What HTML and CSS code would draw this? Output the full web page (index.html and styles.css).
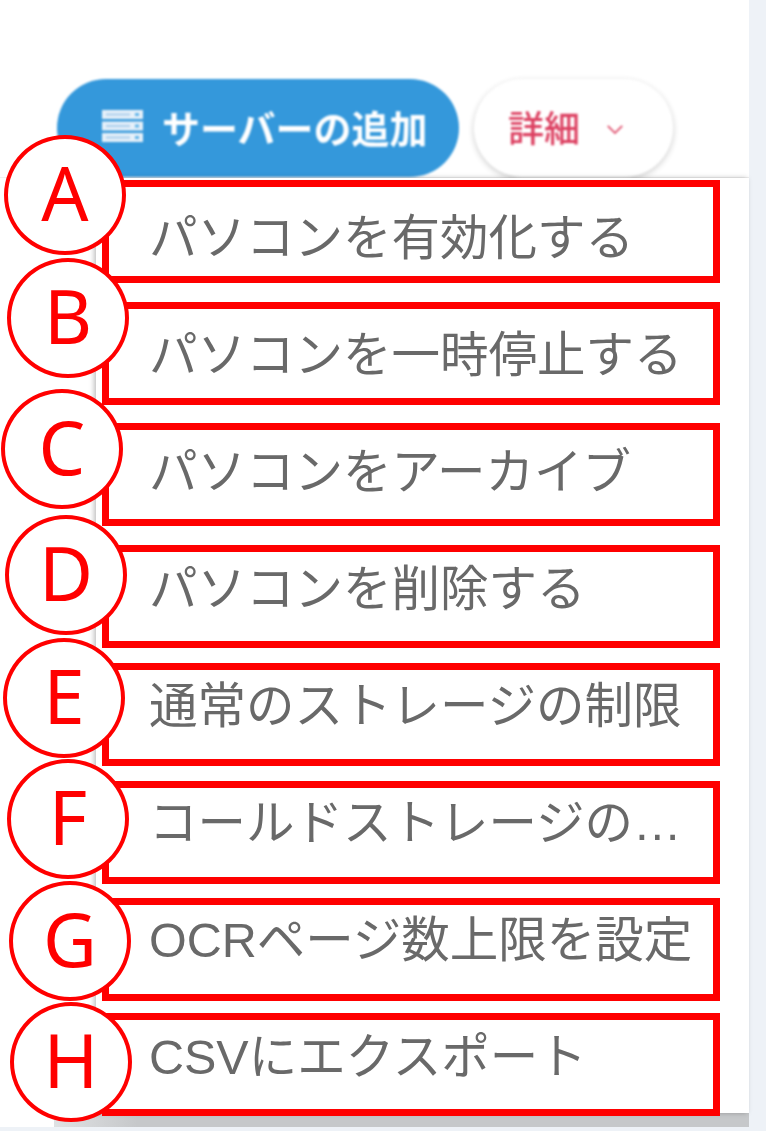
FILE: index.html
```html
<!DOCTYPE html>
<html lang="ja">
<head>
    <meta charset="UTF-8">
    <title>パソコンの操作メニュー</title>
    <link rel="stylesheet" href="styles.css">
</head>
<body>
    <div class="page">
        <div class="main">
            <div class="toolbar">
                <button class="btn btn-primary" type="button">
                    <svg class="btn-icon" viewBox="0 0 41 32" aria-hidden="true">
                        <path fill="#e6f0f9" d="M0 0h41v9H0zM0 11.500h41v9H0zM0 23h41v9H0z"/>
                        <path fill="#a9cdec" d="M4 3.500h24v2H4zM4 15h24v2H4zM4 26.500h24v2H4z"/>
                        <path fill="#5fb4ea" d="M33 3h4v3h-4zM33 14.500h4v3h-4zM33 26h4v3h-4z"/>
                    </svg>
                    サーバーの追加
                </button>
                <button class="btn btn-more" type="button">
                    詳細
                    <svg class="btn-caret" viewBox="0 0 20 12" aria-hidden="true">
                        <path fill="none" stroke="#e0526f" stroke-width="2" d="M2 2l8 8 8-8"/>
                    </svg>
                </button>
            </div>

            <!-- Dropdown menu -->
            <ul class="menu">
                <li class="menu-item"><span>パソコンを有効化する</span></li>
                <li class="menu-item"><span>パソコンを一時停止する</span></li>
                <li class="menu-item"><span>パソコンをアーカイブ</span></li>
                <li class="menu-item"><span>パソコンを削除する</span></li>
                <li class="menu-item"><span>通常のストレージの制限</span></li>
                <li class="menu-item"><span>コールドストレージの制限</span></li>
                <li class="menu-item"><span>OCRページ数上限を設定</span></li>
                <li class="menu-item"><span>CSVにエクスポート</span></li>
            </ul>
            <div class="under-menu"></div>
            <div class="main-foot"></div>
        </div>
        <div class="side"></div>
    </div>

    <!-- Callouts drawn over the screenshot -->
    <div class="mark-box box-a"></div>
    <div class="mark-box box-b"></div>
    <div class="mark-box box-c"></div>
    <div class="mark-box box-d"></div>
    <div class="mark-box box-e"></div>
    <div class="mark-box box-f"></div>
    <div class="mark-box box-g"></div>
    <div class="mark-box box-h"></div>

    <div class="mark-letter letter-a">A</div>
    <div class="mark-letter letter-b">B</div>
    <div class="mark-letter letter-c">C</div>
    <div class="mark-letter letter-d">D</div>
    <div class="mark-letter letter-e">E</div>
    <div class="mark-letter letter-f">F</div>
    <div class="mark-letter letter-g">G</div>
    <div class="mark-letter letter-h">H</div>
</body>
</html>
```

FILE: styles.css
```css
html, body {
    margin: 0;
    height: 100%;
    overflow: hidden;
    background-color: #fff;
    font-family: "Noto Sans CJK JP", "Noto Sans", sans-serif;
}
.page {
    display: flex;
    height: 1131px;
}
.main {
    width: 749px;
    background-color: #fff;
    display: flex;
    flex-direction: column;
}
.side {
    flex: 1;
    background-color: #eef2f7;
}
.toolbar {
    display: flex;
    gap: 15px;
    padding: 79px 0 0 57px;
    height: 178px;
    flex-shrink: 0;
    box-sizing: border-box;
    border-bottom: 1px solid #f1f1f1;
}
.btn {
    height: 98px;
    border: none;
    border-radius: 49px;
    display: flex;
    align-items: center;
    font-family: inherit;
    filter: blur(0.8px);
}
.btn-primary {
    width: 402px;
    padding: 0 0 4px 45px;
    gap: 19px;
    background-color: #3498db;
    color: #fff;
    font-size: 38px;
    font-weight: 700;
}
.btn-icon {
    width: 41px;
    height: 32px;
}
.btn-more {
    width: 199px;
    padding: 0 0 4px 34px;
    gap: 26px;
    background-color: #fff;
    color: #dc3f60;
    font-size: 36px;
    font-weight: 500;
    box-shadow: 0 2px 6px rgba(0, 0, 0, 0.2);
}
.btn-caret {
    width: 18px;
    height: 11px;
    margin-top: 6px;
}
.menu {
    list-style: none;
    margin: 0 0 0 96px;
    padding: 0;
    height: 935px;
    flex-shrink: 0;
    background-color: #fff;
    box-shadow: -2px 0 5px rgba(0, 0, 0, 0.25);
    position: relative;
    display: flex;
    flex-direction: column;
}
.menu-item {
    flex: 1;
    display: flex;
    align-items: center;
    padding: 4px 54px 0 53px;
    min-width: 0;
    color: #696969;
    font-size: 48.500px;
    font-weight: 400;
    font-family: "Liberation Sans", "Noto Sans CJK JP", sans-serif;
    filter: blur(0.6px);
}
.menu-item span {
    display: block;
    line-height: 70px;
    white-space: nowrap;
    overflow: hidden;
    text-overflow: ellipsis;
}
.under-menu {
    height: 14px;
    flex-shrink: 0;
    margin-left: 54px;
    background: linear-gradient(90deg, #dfe1e3, #c6c8ca 12%);
}
.main-foot {
    flex: 1;
    background-color: #eef2f7;
}
.mark-box {
    position: absolute;
    left: 102px;
    width: 618px;
    height: 103px;
    box-sizing: border-box;
    border: 7px solid #f00;
}
.box-a { top: 180px; }
.box-b { top: 302px; }
.box-c { top: 423px; }
.box-d { top: 545px; }
.box-e { top: 663px; }
.box-f { top: 781px; }
.box-g { top: 898px; }
.box-h { top: 1013px; }
.mark-letter {
    position: absolute;
    width: 122px;
    height: 120px;
    box-sizing: border-box;
    border: 4px solid #f00;
    border-radius: 50%;
    background-color: #fff;
    color: #f00;
    font-family: "Noto Sans", sans-serif;
    font-size: 74px;
    line-height: 108px;
    text-align: center;
}
.letter-a { left: 4px; top: 135px; }
.letter-b { left: 7px; top: 258px; }
.letter-c { left: 1px; top: 389px; }
.letter-d { left: 5px; top: 515px; }
.letter-e { left: 3px; top: 638px; }
.letter-f { left: 7px; top: 759px; }
.letter-g { left: 9px; top: 881px; }
.letter-h { left: 10px; top: 1002px; }
```
